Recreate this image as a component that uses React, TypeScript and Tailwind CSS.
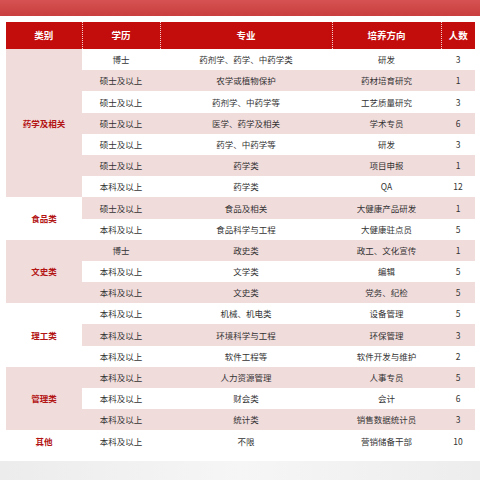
type Row = { degree: string; major: string; direction: string; count: number };

type Group = { category: string; rows: Row[] };

const GROUPS: Group[] = [
  {
    category: "药学及相关",
    rows: [
      { degree: "博士", major: "药剂学、药学、中药学类", direction: "研发", count: 3 },
      { degree: "硕士及以上", major: "农学或植物保护", direction: "药材培育研究", count: 1 },
      { degree: "硕士及以上", major: "药剂学、中药学等", direction: "工艺质量研究", count: 3 },
      { degree: "硕士及以上", major: "医学、药学及相关", direction: "学术专员", count: 6 },
      { degree: "硕士及以上", major: "药学、中药学等", direction: "研发", count: 3 },
      { degree: "硕士及以上", major: "药学类", direction: "项目申报", count: 1 },
      { degree: "本科及以上", major: "药学类", direction: "QA", count: 12 },
    ],
  },
  {
    category: "食品类",
    rows: [
      { degree: "硕士及以上", major: "食品及相关", direction: "大健康产品研发", count: 1 },
      { degree: "本科及以上", major: "食品科学与工程", direction: "大健康驻点员", count: 5 },
    ],
  },
  {
    category: "文史类",
    rows: [
      { degree: "博士", major: "政史类", direction: "政工、文化宣传", count: 1 },
      { degree: "本科及以上", major: "文学类", direction: "编辑", count: 5 },
      { degree: "本科及以上", major: "文史类", direction: "党务、纪检", count: 5 },
    ],
  },
  {
    category: "理工类",
    rows: [
      { degree: "本科及以上", major: "机械、机电类", direction: "设备管理", count: 5 },
      { degree: "本科及以上", major: "环境科学与工程", direction: "环保管理", count: 3 },
      { degree: "本科及以上", major: "软件工程等", direction: "软件开发与维护", count: 2 },
    ],
  },
  {
    category: "管理类",
    rows: [
      { degree: "本科及以上", major: "人力资源管理", direction: "人事专员", count: 5 },
      { degree: "本科及以上", major: "财会类", direction: "会计", count: 6 },
      { degree: "本科及以上", major: "统计类", direction: "销售数据统计员", count: 3 },
    ],
  },
  {
    category: "其他",
    rows: [{ degree: "本科及以上", major: "不限", direction: "营销储备干部", count: 10 }],
  },
];

const HEADERS = ["类别", "学历", "专业", "培养方向", "人数"];
const COL_WIDTHS = ["w-[76px]", "w-[78px]", "w-[172px]", "w-[109px]", "w-[34px]"];

export default function App() {
  let rowIndex = 0;
  return (
    <div
      className="flex h-[480px] w-[480px] flex-col overflow-hidden bg-white"
      style={{ fontFamily: '"Noto Sans CJK SC", "Noto Sans", sans-serif' }}
    >
      <div className="h-[16px] shrink-0 bg-gradient-to-b from-[#d65252] to-[#c93e3e]" />
      <div className="shrink-0 px-[6px] pt-[6px] pb-[9px]">
        <table className="w-[469px] table-fixed border-collapse">
          <colgroup>
            {COL_WIDTHS.map((w, i) => (
              <col key={i} className={w} />
            ))}
          </colgroup>
          <thead>
            <tr className="h-[27px] bg-[#c30d0d]">
              {HEADERS.map((h, i) => (
                <th
                  key={h}
                  className={
                    i < HEADERS.length - 1
                      ? "border-r border-dotted border-white/80 p-0 text-center text-[9.5px] font-bold text-white"
                      : "p-0 text-center text-[9.5px] font-bold text-white"
                  }
                >
                  {h}
                </th>
              ))}
            </tr>
          </thead>
          <tbody>
            {GROUPS.map((g, gi) =>
              g.rows.map((r, ri) => {
                const pink = rowIndex++ % 2 === 1;
                return (
                  <tr
                    key={`${gi}-${ri}`}
                    className={pink ? "h-[21.2px] bg-[#f1dcdc]" : "h-[21.2px] bg-white"}
                  >
                    {ri === 0 && (
                      <td
                        rowSpan={g.rows.length}
                        className={
                          gi % 2 === 0
                            ? "bg-[#f1dcdc] p-0 text-center text-[8.5px] font-bold text-[#b31414]"
                            : "bg-white p-0 text-center text-[8.5px] font-bold text-[#b31414]"
                        }
                      >
                        {g.category}
                      </td>
                    )}
                    <td className="p-0 text-center text-[8.5px] text-[#333]">{r.degree}</td>
                    <td className="p-0 text-center text-[8.5px] text-[#333]">{r.major}</td>
                    <td className="p-0 text-center text-[8.5px] text-[#333]">{r.direction}</td>
                    <td className="p-0 text-center text-[8.5px] text-[#333]">{r.count}</td>
                  </tr>
                );
              }),
            )}
          </tbody>
        </table>
      </div>
      <div className="flex-1 bg-gradient-to-r from-[#ececec] via-[#f6f6f6] to-[#ededed]" />
    </div>
  );
}
